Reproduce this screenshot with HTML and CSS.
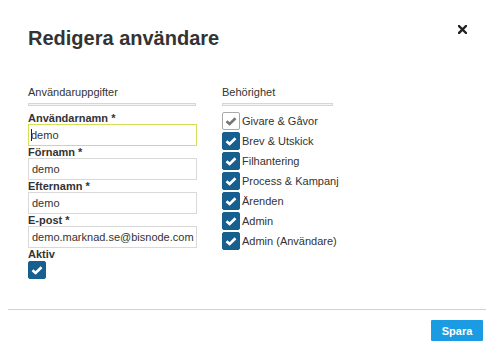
FILE: index.html
```html
<!DOCTYPE html>
<html lang="sv">
<head>
    <meta charset="UTF-8">
    <title>Redigera användare</title>
    <link rel="stylesheet" href="styles.css">
</head>
<body>
    <div class="modal">
        <div class="modal-header">
            <h1>Redigera användare</h1>
            <button class="close" title="Stäng">
                <svg width="9" height="9" viewBox="0 0 9 9"><path d="M1 1 L8 8 M8 1 L1 8" stroke="#222" stroke-width="2.4" stroke-linecap="square"/></svg>
            </button>
        </div>

        <div class="modal-body">
            <div class="col col-user">
                <div class="section-title">Användaruppgifter</div>
                <div class="divider"></div>

                <label class="field-label">Användarnamn *</label>
                <div class="field focused"><span class="caret"></span>demo</div>

                <label class="field-label">Förnamn *</label>
                <input class="field" type="text" value="demo">

                <label class="field-label">Efternamn *</label>
                <input class="field" type="text" value="demo">

                <label class="field-label">E-post *</label>
                <input class="field" type="text" value="demo.marknad.se@bisnode.com">

                <label class="field-label">Aktiv</label>
                <span class="check checked"><svg width="18" height="18" viewBox="0 0 18 18"><path d="M4.5 9.2 L7.6 12 L13.5 6.2" fill="none" stroke="#fff" stroke-width="2.6"/></svg></span>
            </div>

            <div class="col col-rights">
                <div class="section-title">Behörighet</div>
                <div class="divider"></div>

                <div class="right-list">
                    <div class="right-item">
                        <span class="check"><svg width="18" height="18" viewBox="0 0 18 18"><path d="M4.5 9.2 L7.6 12 L13.5 6.2" fill="none" stroke="#777" stroke-width="2.6"/></svg></span>
                        Givare &amp; Gåvor
                    </div>
                    <div class="right-item">
                        <span class="check checked"><svg width="18" height="18" viewBox="0 0 18 18"><path d="M4.5 9.2 L7.6 12 L13.5 6.2" fill="none" stroke="#fff" stroke-width="2.6"/></svg></span>
                        Brev &amp; Utskick
                    </div>
                    <div class="right-item">
                        <span class="check checked"><svg width="18" height="18" viewBox="0 0 18 18"><path d="M4.5 9.2 L7.6 12 L13.5 6.2" fill="none" stroke="#fff" stroke-width="2.6"/></svg></span>
                        Filhantering
                    </div>
                    <div class="right-item">
                        <span class="check checked"><svg width="18" height="18" viewBox="0 0 18 18"><path d="M4.5 9.2 L7.6 12 L13.5 6.2" fill="none" stroke="#fff" stroke-width="2.6"/></svg></span>
                        Process &amp; Kampanj
                    </div>
                    <div class="right-item">
                        <span class="check checked"><svg width="18" height="18" viewBox="0 0 18 18"><path d="M4.5 9.2 L7.6 12 L13.5 6.2" fill="none" stroke="#fff" stroke-width="2.6"/></svg></span>
                        Ärenden
                    </div>
                    <div class="right-item">
                        <span class="check checked"><svg width="18" height="18" viewBox="0 0 18 18"><path d="M4.5 9.2 L7.6 12 L13.5 6.2" fill="none" stroke="#fff" stroke-width="2.6"/></svg></span>
                        Admin
                    </div>
                    <div class="right-item">
                        <span class="check checked"><svg width="18" height="18" viewBox="0 0 18 18"><path d="M4.5 9.2 L7.6 12 L13.5 6.2" fill="none" stroke="#fff" stroke-width="2.6"/></svg></span>
                        Admin (Användare)
                    </div>
                </div>
            </div>
        </div>

        <div class="modal-footer">
            <button class="btn-save">Spara</button>
        </div>
    </div>
</body>
</html>
```

FILE: styles.css
```css
body {
    margin: 0;
    background: #fff;
    font-family: 'Liberation Sans', Arial, sans-serif;
    color: #333;
}

.modal {
    width: 498px;
    height: 352px;
    background: #fff;
}

.modal-header {
    display: flex;
    justify-content: space-between;
    align-items: flex-start;
    padding: 26px 31px 0 28px;
}

.modal-header h1 {
    margin: 0;
    font-size: 20px;
    line-height: 24px;
    font-weight: bold;
    color: #333;
}

.close {
    border: none;
    background: none;
    padding: 0;
    margin-top: -1px;
    cursor: pointer;
    display: block;
}

.close svg {
    display: block;
}

.modal-body {
    display: flex;
    gap: 25px;
    padding: 36px 0 0 28px;
}

.col-user {
    width: 169px;
    display: flex;
    flex-direction: column;
}

.col-rights {
    width: 111px;
}

.section-title {
    font-size: 11px;
    line-height: 13px;
    color: #333;
}

.divider {
    height: 1px;
    background: #f4f4f4;
    border: 1px solid #d6d6d6;
    margin: 4px 0 6px 0;
}

.col-user .divider {
    margin-right: 1px;
}

.field-label {
    font-size: 11px;
    line-height: 12px;
    font-weight: bold;
    color: #333;
}

.field {
    box-sizing: border-box;
    width: 169px;
    height: 22px;
    margin: 0;
    padding: 0 2px 0 3px;
    border: 1px solid #d9d9d9;
    font-family: 'Liberation Sans', Arial, sans-serif;
    font-size: 11px;
    line-height: 20px;
    color: #333;
    outline: none;
    background: #fff;
}

.field.focused {
    border-color: #d5df5a;
    padding-left: 2px;
}

.caret {
    display: inline-block;
    width: 1px;
    height: 12px;
    background: #222;
    vertical-align: -2px;
    margin-right: -1px;
}

.check {
    box-sizing: border-box;
    display: inline-block;
    width: 18px;
    height: 18px;
    border: 1px solid #a9a9a9;
    border-radius: 2px;
    background: #fff;
    flex-shrink: 0;
}

.check svg {
    display: block;
    margin: -1px;
}

.check.checked {
    background: #175f8e;
    border-color: #175f8e;
}

.col-user .check {
    margin-top: 1px;
}

.right-list {
    display: flex;
    flex-direction: column;
    gap: 2px;
}

.right-item {
    display: flex;
    align-items: center;
    gap: 2px;
    height: 18px;
    font-size: 11px;
    white-space: nowrap;
    color: #333;
}

.modal-footer {
    display: flex;
    justify-content: flex-end;
    margin: 30px 12px 0 8px;
    padding: 10px 3px 0 0;
    border-top: 1px solid #d2d2d2;
}

.btn-save {
    width: 52px;
    height: 21px;
    border: none;
    border-radius: 1px;
    background: #1b9ce2;
    color: #fff;
    font-family: 'Liberation Sans', Arial, sans-serif;
    font-size: 11px;
    font-weight: bold;
    cursor: pointer;
}
```
